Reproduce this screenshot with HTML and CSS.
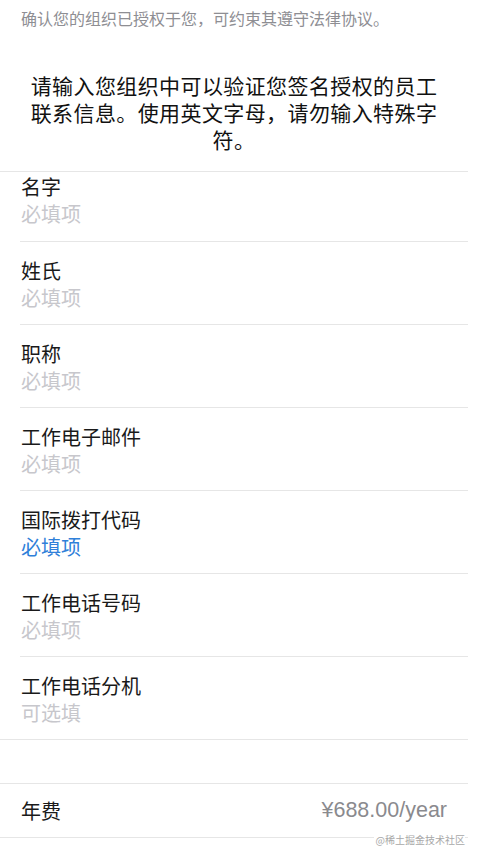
FILE: index.html
```html
<!DOCTYPE html>
<html lang="zh-CN">
<head>
<meta charset="utf-8">
<title>联系信息</title>
<link rel="stylesheet" href="styles.css">
</head>
<body>
<div class="page">
  <p class="intro">确认您的组织已授权于您，可约束其遵守法律协议。</p>
  <h1 class="heading">请输入您组织中可以验证您签名授权的员工联系信息。使用英文字母，请勿输入特殊字符。</h1>
  <div class="group">
    <div class="row row-first">
      <div class="label">名字</div>
      <div class="hint">必填项</div>
    </div>
    <div class="row">
      <div class="label">姓氏</div>
      <div class="hint">必填项</div>
    </div>
    <div class="row">
      <div class="label">职称</div>
      <div class="hint">必填项</div>
    </div>
    <div class="row">
      <div class="label">工作电子邮件</div>
      <div class="hint">必填项</div>
    </div>
    <div class="row">
      <div class="label">国际拨打代码</div>
      <div class="hint hint-active">必填项</div>
    </div>
    <div class="row">
      <div class="label">工作电话号码</div>
      <div class="hint">必填项</div>
    </div>
    <div class="row row-last">
      <div class="label">工作电话分机</div>
      <div class="hint">可选填</div>
    </div>
  </div>
  <div class="fee">
    <span class="fee-label">年费</span>
    <span class="fee-value">¥688.00/year</span>
  </div>
  <div class="watermark">@稀土掘金技术社区</div>
</div>
</body>
</html>
```
FILE: styles.css
```css
html, body {
  margin: 0;
  padding: 0;
  background: #ffffff;
}

body {
  font-family: "Noto Sans CJK SC", "Noto Sans", sans-serif;
  width: 482px;
  height: 859px;
  overflow: hidden;
}

.page {
  position: relative;
  width: 468px;
  height: 859px;
}

.intro {
  margin: 0;
  padding: 8px 0 0 21px;
  font-size: 16px;
  line-height: 20px;
  color: #8e8e93;
}

.heading {
  margin: 44px 29px 0 29px;
  font-size: 21px;
  font-weight: normal;
  letter-spacing: 0.4px;
  line-height: 27px;
  text-align: center;
  color: #111111;
}

.group {
  margin-top: 18px;
  border-top: 1px solid #e6e6e6;
  border-bottom: 1px solid #e6e6e6;
}

.row {
  margin-left: 20px;
  padding: 15px 0 13px 1px;
  border-bottom: 1px solid #e6e6e6;
  display: flex;
  flex-direction: column;
}

.row-first {
  padding-top: 1px;
  padding-bottom: 14px;
}

.row-last {
  border-bottom: none;
}

.label,
.hint {
  font-size: 20px;
  line-height: 27px;
}

.label {
  color: #1a1a1a;
}

.hint {
  color: #c7c7cc;
}

.hint-active {
  color: #2f80d9;
}

.fee {
  margin-top: 43px;
  border-top: 1px solid #e6e6e6;
  border-bottom: 1px solid #e6e6e6;
  height: 53px;
  display: flex;
  align-items: center;
  justify-content: space-between;
  padding: 0 21px 0 21px;
}

.fee-label {
  font-size: 20px;
  color: #1a1a1a;
}

.fee-value {
  font-family: "Liberation Sans", "Noto Sans", sans-serif;
  font-size: 21.5px;
  color: #8a8a8e;
}

.watermark {
  position: absolute;
  top: 832px;
  right: 3px;
  padding-left: 2px;
  background: #ffffff;
  font-size: 10px;
  line-height: 15px;
  color: #a8a8a8;
}
```
